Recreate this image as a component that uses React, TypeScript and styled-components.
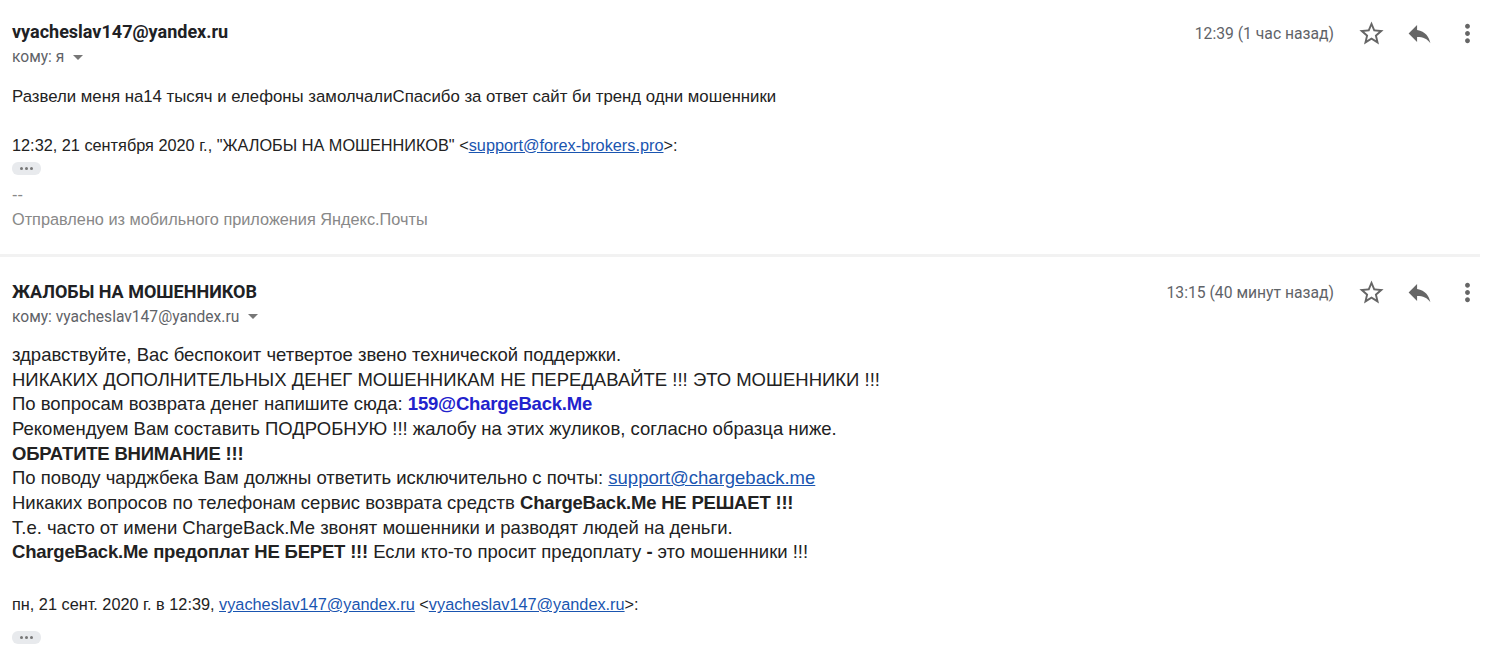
import styled, { createGlobalStyle } from 'styled-components';

const GlobalStyle = createGlobalStyle`
  html, body {
    margin: 0;
    padding: 0;
    background: #fff;
  }
`;

const Thread = styled.div`
  width: 1500px;
  height: 651px;
  overflow: hidden;
  background: #fff;
`;

const Message = styled.section<{ $last?: boolean }>`
  margin-right: 20px;
  padding: ${(p) => (p.$last ? '21px 0 0 12px' : '18px 0 22px 12px')};
  border-bottom: ${(p) => (p.$last ? 'none' : '3px solid #f2f2f2')};
`;

const Header = styled.div`
  display: flex;
  align-items: flex-start;
  justify-content: space-between;
`;

const Sender = styled.div`
  display: flex;
  flex-direction: column;
`;

const SenderName = styled.div`
  font-family: Roboto, Arial, sans-serif;
  font-weight: 700;
  font-size: 18px;
  line-height: 28px;
  color: #202124;
`;

const Recipient = styled.div`
  display: flex;
  align-items: center;
  gap: 9px;
  font-family: Roboto, Arial, sans-serif;
  font-size: 15.6px;
  line-height: 22px;
  color: #5f6368;
`;

const Caret = styled.span`
  width: 0;
  height: 0;
  border-left: 5px solid transparent;
  border-right: 5px solid transparent;
  border-top: 5px solid #777;
`;

const Meta = styled.div`
  display: flex;
  align-items: center;
  margin-right: -11px;
  padding-top: 1px;
`;

const Time = styled.span`
  font-family: Roboto, Arial, sans-serif;
  font-size: 15.7px;
  color: #5f6368;
  margin-right: 13px;
`;

const IconButton = styled.span`
  width: 48px;
  height: 28px;
  display: flex;
  align-items: center;
  justify-content: center;
  color: #666;
  svg {
    width: 29px;
    height: 29px;
    fill: currentColor;
  }
`;

const Body = styled.div`
  font-family: 'Liberation Sans', Arial, sans-serif;
  font-size: 16.3px;
  line-height: 24.7px;
  color: #222;
`;

const Para = styled.p<{ $gap?: number; $size?: number }>`
  margin: 0;
  margin-top: ${(p) => p.$gap ?? 0}px;
  font-size: ${(p) => (p.$size ? `${p.$size}px` : 'inherit')};
`;

const Strong = styled.b`
  font-weight: 700;
  letter-spacing: -0.2px;
`;

const Muted = styled.div`
  color: #888;
`;

const Link = styled.a`
  color: #1a55b0;
  text-decoration: underline;
`;

const BrandLink = styled.a`
  color: #2222cc;
  font-weight: 700;
  letter-spacing: -0.2px;
  text-decoration: none;
`;

const Dots = styled.span<{ $top: number; $bottom: number }>`
  display: flex;
  align-items: center;
  justify-content: center;
  gap: 2px;
  width: 29px;
  height: 13px;
  border-radius: 6px;
  background: #e8eaed;
  margin: ${(p) => p.$top}px 0 ${(p) => p.$bottom}px;
  i {
    width: 3px;
    height: 3px;
    border-radius: 50%;
    background: #777;
  }
`;

const StarIcon = () => (
  <svg viewBox="0 0 24 24">
    <path d="M22 9.24l-7.19-.62L12 2 9.19 8.63 2 9.24l5.46 4.73L5.82 21 12 17.27 18.18 21l-1.63-7.03L22 9.24zM12 15.4l-3.76 2.27 1-4.28-3.32-2.88 4.38-.38L12 6.1l1.71 4.04 4.38.38-3.32 2.88 1 4.28L12 15.4z" />
  </svg>
);

const ReplyIcon = () => (
  <svg viewBox="0 0 24 24">
    <path d="M10 9V5l-7 7 7 7v-4.1c5 0 8.5 1.6 11 5.1-1-5-4-10-11-11z" />
  </svg>
);

const MoreIcon = () => (
  <svg viewBox="0 0 24 24">
    <path d="M12 8c1.1 0 2-.9 2-2s-.9-2-2-2-2 .9-2 2 .9 2 2 2zm0 2c-1.1 0-2 .9-2 2s.9 2 2 2 2-.9 2-2-.9-2-2-2zm0 6c-1.1 0-2 .9-2 2s.9 2 2 2 2-.9 2-2-.9-2-2-2z" />
  </svg>
);

function MessageHeader({ from, to, time }: { from: string; to: string; time: string }) {
  return (
    <Header>
      <Sender>
        <SenderName>{from}</SenderName>
        <Recipient>
          кому: {to} <Caret />
        </Recipient>
      </Sender>
      <Meta>
        <Time>{time}</Time>
        <IconButton>
          <StarIcon />
        </IconButton>
        <IconButton>
          <ReplyIcon />
        </IconButton>
        <IconButton>
          <MoreIcon />
        </IconButton>
      </Meta>
    </Header>
  );
}

function Ellipsis({ top, bottom }: { top: number; bottom: number }) {
  return (
    <Dots $top={top} $bottom={bottom}>
      <i />
      <i />
      <i />
    </Dots>
  );
}

export default function App() {
  return (
    <Thread>
      <GlobalStyle />
      <Message>
        <MessageHeader from="vyacheslav147@yandex.ru" to="я" time="12:39 (1 час назад)" />
        <Body>
          <Para $gap={17} $size={16.8}>
            Развели меня на14 тысяч и елефоны замолчалиСпасибо за ответ сайт би тренд одни мошенники
          </Para>
          <Para $gap={23}>
            12:32, 21 сентября 2020 г., "ЖАЛОБЫ НА МОШЕННИКОВ" &lt;
            <Link href="#">support@forex-brokers.pro</Link>&gt;:
          </Para>
          <Ellipsis top={5} bottom={7} />
          <Muted>
            --
            <br />
            Отправлено из мобильного приложения Яндекс.Почты
          </Muted>
        </Body>
      </Message>
      <Message $last>
        <MessageHeader
          from="ЖАЛОБЫ НА МОШЕННИКОВ"
          to="vyacheslav147@yandex.ru"
          time="13:15 (40 минут назад)"
        />
        <Body>
          <Para $gap={15} $size={18.5}>
            здравствуйте, Вас беспокоит четвертое звено технической поддержки.
            <br />
            НИКАКИХ ДОПОЛНИТЕЛЬНЫХ ДЕНЕГ МОШЕННИКАМ НЕ ПЕРЕДАВАЙТЕ !!! ЭТО МОШЕННИКИ !!!
            <br />
            По вопросам возврата денег напишите сюда: <BrandLink href="#">159@ChargeBack.Me</BrandLink>
            <br />
            Рекомендуем Вам составить ПОДРОБНУЮ !!! жалобу на этих жуликов, согласно образца ниже.
            <br />
            <Strong>ОБРАТИТЕ ВНИМАНИЕ !!!</Strong>
            <br />
            По поводу чарджбека Вам должны ответить исключительно с почты:{' '}
            <Link href="#">support@chargeback.me</Link>
            <br />
            Никаких вопросов по телефонам сервис возврата средств <Strong>ChargeBack.Me НЕ РЕШАЕТ !!!</Strong>
            <br />
            Т.е. часто от имени ChargeBack.Me звонят мошенники и разводят людей на деньги.
            <br />
            <Strong>ChargeBack.Me предоплат НЕ БЕРЕТ !!!</Strong> Если кто-то просит предоплату <Strong>-</Strong> это
            мошенники !!!
          </Para>
          <Para $gap={27}>
            пн, 21 сент. 2020 г. в 12:39, <Link href="#">vyacheslav147@yandex.ru</Link> &lt;
            <Link href="#">vyacheslav147@yandex.ru</Link>&gt;:
          </Para>
          <Ellipsis top={14} bottom={0} />
        </Body>
      </Message>
    </Thread>
  );
}
